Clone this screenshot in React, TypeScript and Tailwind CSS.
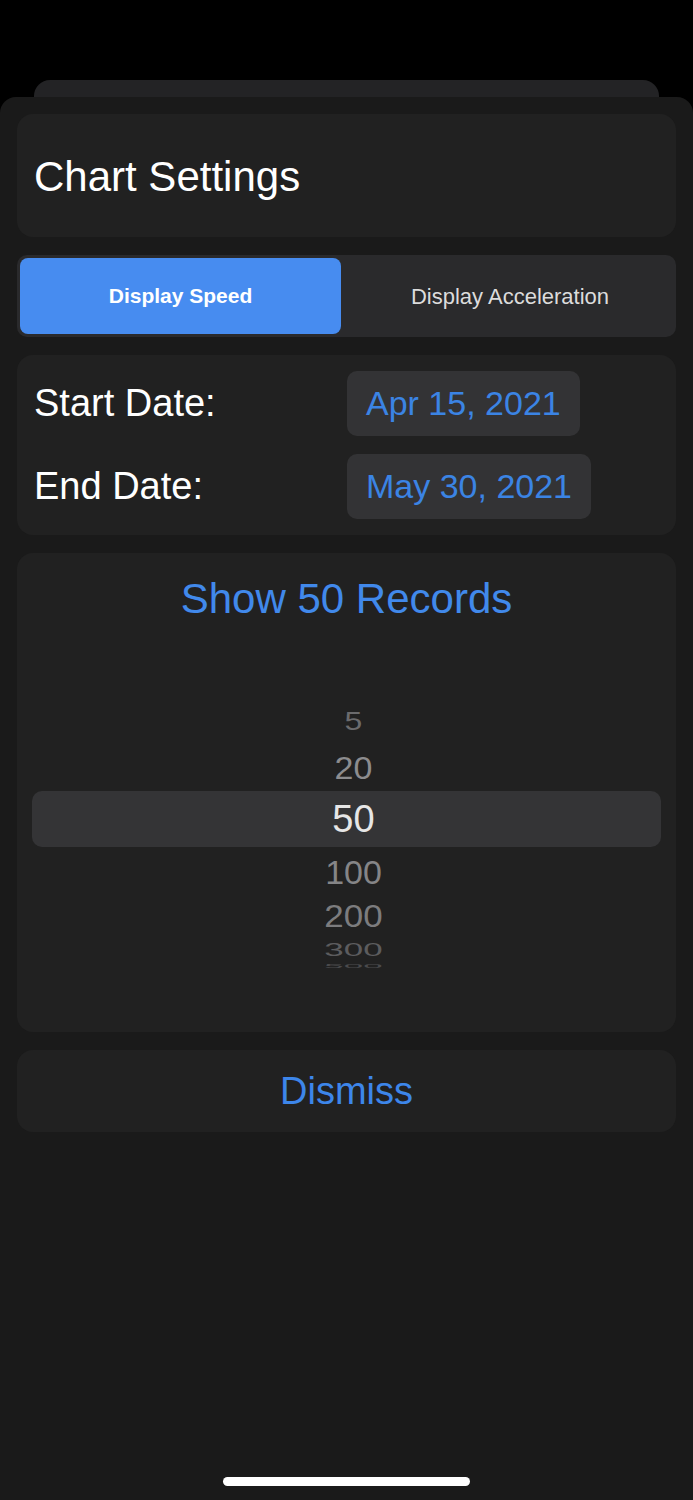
const pickerRows = [
	{ label: "5", box: "h-[46px]", text: "text-[32px] scale-y-[0.8] text-[#6b6b6d]" },
	{ label: "20", box: "h-[47px]", text: "text-[34px] scale-y-[0.94] text-[#8c8c8e]" },
	{ label: "50", box: "h-[56px]", text: "text-[38px] text-[#e6e6e6]", selected: true },
	{ label: "100", box: "h-[50px]", text: "text-[34px] text-[#858587]" },
	{ label: "200", box: "h-[38px]", text: "text-[35px] scale-y-[0.88] text-[#7c7c7e]" },
	{ label: "300", box: "h-[28px]", text: "text-[35px] scale-y-[0.52] text-[#5c5c5e]" },
];

function Card({ className, children }: { className?: string; children: React.ReactNode }) {
	return <div className={`rounded-[16px] bg-[#212121] ${className ?? ""}`}>{children}</div>;
}

function DateRow({ label, value }: { label: string; value: string }) {
	return (
		<div className="flex items-center">
			<span className="w-[330px] pl-[17px] text-[38px] text-white">{label}</span>
			<span className="flex h-[65px] items-center rounded-[10px] bg-[#333335] px-[19px] text-[34px] text-[#3b84e4]">
				{value}
			</span>
		</div>
	);
}

export default function App() {
	return (
		<div
			className="flex h-[1500px] flex-col overflow-hidden bg-black pt-[80px]"
			style={{ fontFamily: '"Liberation Sans", Arial, sans-serif' }}
		>
			<div className="mx-[34px] h-[17px] shrink-0 rounded-t-[16px] bg-[#232325]" />

			<div className="flex flex-1 flex-col rounded-t-[16px] bg-[#1a1a1a] px-[17px] pt-[17px]">
				<div className="flex flex-col gap-[18px]">
					<Card className="flex h-[123px] items-center px-[17px]">
						<h1 className="pt-[2px] text-[42px] leading-none text-white">Chart Settings</h1>
					</Card>

					<div className="flex h-[82px] rounded-[10px] bg-[#2a2a2c] p-[3px]">
						<button className="flex w-[321px] items-center justify-center rounded-[8px] bg-[#478cf0] text-[21px] font-bold text-white">
							Display Speed
						</button>
						<button className="flex flex-1 items-center justify-center pl-[6px] text-[22px] text-[#dcdcdc]">
							Display Acceleration
						</button>
					</div>

					<Card className="flex flex-col gap-[18px] py-[16px]">
						<DateRow label="Start Date:" value="Apr 15, 2021" />
						<DateRow label="End Date:" value="May 30, 2021" />
					</Card>

					<Card className="flex h-[479px] flex-col px-[15px]">
						<div className="flex h-[88px] items-center justify-center pt-[2px] text-[42px] text-[#4189eb]">
							Show 50 Records
						</div>
						<div className="mt-[57px] flex flex-col">
							{pickerRows.map((row) => (
								<div
									key={row.label}
									className={`flex items-center justify-center pl-[14px] ${row.box} ${
										row.selected ? "rounded-[10px] bg-[#343436]" : ""
									}`}
								>
									<span className={`inline-block leading-none ${row.text}`}>{row.label}</span>
								</div>
							))}
							<div className="flex h-[6px] items-center justify-center pl-[14px]">
								<span className="inline-block scale-y-[0.14] text-[35px] leading-none text-[#4a4a4c]">500</span>
							</div>
						</div>
					</Card>

					<Card className="flex h-[82px] items-center justify-center">
						<span className="text-[38px] text-[#3d86ea]">Dismiss</span>
					</Card>
				</div>

				<div className="flex-1" />
				<div className="mx-auto mb-[14px] h-[9px] w-[247px] rounded-full bg-white" />
			</div>
		</div>
	);
}
